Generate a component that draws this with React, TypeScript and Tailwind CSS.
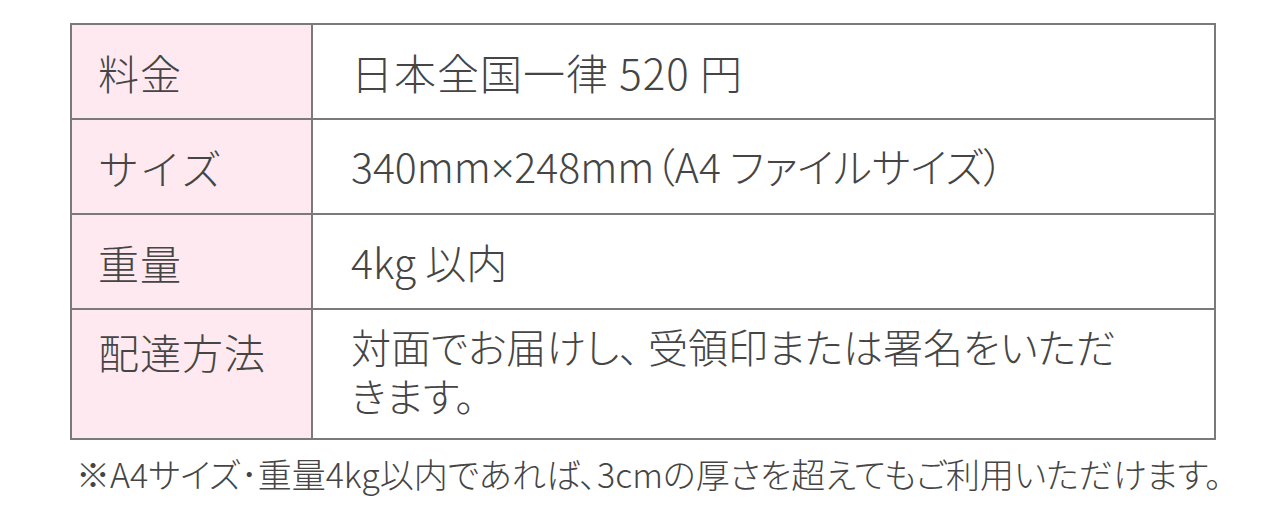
import type { ReactNode } from 'react'

type Row = { label: string; value: ReactNode; size: string; tall?: boolean }

const rows: Row[] = [
  { label: '料金', value: '日本全国一律 520 円', size: 'text-[42px] tracking-[1px]' },
  {
    label: 'サイズ',
    value: (
      <>
        340mm<span className="font-['Noto_Sans',sans-serif]">×</span>248mm（A4 ファイルサイズ）
      </>
    ),
    size: 'text-[41px]',
  },
  { label: '重量', value: '4kg 以内', size: 'text-[41px]' },
  {
    label: '配達方法',
    value: (
      <>
        対面でお届けし、 受領印または署名をいただ
        <br />
        きます。
      </>
    ),
    size: 'text-[40px]',
    tall: true,
  },
]

export default function App() {
  return (
    <div className="w-[1280px] h-[530px] bg-white text-[#454545] font-light font-['Noto_Sans_CJK_JP','Noto_Sans',sans-serif]">
      <div className="pl-[70px] pt-[23px] w-[1216px]">
        <table className="w-full border-collapse border-2 border-[#7a7a7a] table-fixed">
          <tbody>
            {rows.map((row) => (
              <tr key={row.label} className={row.tall ? 'h-[130px]' : 'h-[95px]'}>
                <td
                  className={`w-[241px] border-2 border-[#7a7a7a] bg-[#fde9ef] pl-[26px] text-[41px] leading-[48px] tracking-[1px] ${
                    row.tall ? 'align-top pt-[17px]' : 'align-middle'
                  }`}
                >
                  {row.label}
                </td>
                <td
                  className={`border-2 border-[#7a7a7a] pl-[38px] leading-[49px] [font-feature-settings:'palt'] ${row.size} ${
                    row.tall ? 'align-top pt-[12px]' : 'align-middle'
                  }`}
                >
                  {row.value}
                </td>
              </tr>
            ))}
          </tbody>
        </table>
      </div>
      <p className="pl-[76px] pt-[14px] text-[34px] leading-[40px] whitespace-nowrap [font-feature-settings:'palt']">
        ※A4サイズ･重量4kg以内であれば､3cmの厚さを超えてもご利用いただけます。
      </p>
    </div>
  )
}
